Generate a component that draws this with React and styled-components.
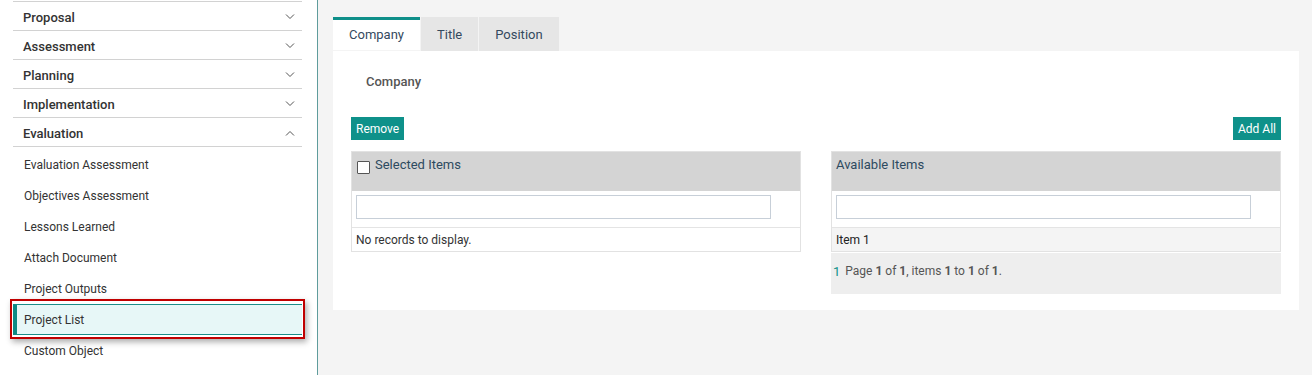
import React from "react";
import styled, { createGlobalStyle } from "styled-components";

const Global = createGlobalStyle`
  html, body { margin: 0; padding: 0; background: #f4f4f4; }
  body { font-family: Roboto, "Liberation Sans", Arial, sans-serif; color: #333; }
  * { box-sizing: border-box; }
`;

const Page = styled.div`
  display: flex;
  height: 375px;
  overflow: hidden;
`;

const Sidebar = styled.nav`
  width: 318px;
  flex: none;
  background: #fff;
  border-right: 1px solid #5f9c9c;
  padding: 1px 15px 0 13px;
`;

const Section = styled.div`
  border-top: 1px solid #d2d2d2;
`;

const SectionHead = styled.div`
  height: 28px;
  display: flex;
  align-items: center;
  justify-content: space-between;
  padding: 2px 7px 0 10px;
  font-size: 13px;
  font-weight: 500;
  color: #333;
`;

const SubList = styled.div`
  border-top: 1px solid #d2d2d2;
  padding-top: 2px;
`;

const SubItem = styled.div`
  position: relative;
  height: 31px;
  display: flex;
  align-items: center;
  font-size: 12px;
  color: #333;
  padding-left: ${(p) => (p.$active ? "7px" : "11px")};
  ${(p) =>
    p.$active &&
    `
    background: #e7f7f7;
    border-left: 4px solid #0e8a85;
    border-top: 1px solid #1a8d88;
    border-bottom: 1px solid #1a8d88;
    &::after {
      content: "";
      position: absolute;
      left: -7px;
      right: -3px;
      top: -6px;
      bottom: -5px;
      border: 2px solid #c00000;
      box-shadow: 2px 3px 6px rgba(0,0,0,0.32);
      pointer-events: none;
    }
  `}
`;

const Chevron = ({ up }) => (
  <svg width="10" height="6" viewBox="0 0 10 6" fill="none">
    <polyline
      points={up ? "1,5.5 5,1.5 9,5.5" : "1,0.5 5,4.5 9,0.5"}
      stroke="#555"
      strokeWidth="1"
    />
  </svg>
);

const Main = styled.main`
  flex: 1;
  padding: 17px 13px 0 15px;
  background: #f4f4f4;
`;

const Tabs = styled.div`
  display: flex;
  gap: 1px;
  align-items: flex-start;
`;

const Tab = styled.div`
  height: ${(p) => (p.$active ? "33px" : "34px")};
  padding: 0 16px 2px;
  display: flex;
  align-items: center;
  font-size: 13px;
  color: #34495e;
  background: ${(p) => (p.$active ? "#fff" : "#e6e6e6")};
  border-top: 3px solid ${(p) => (p.$active ? "#0e8f89" : "#e6e6e6")};
`;

const Panel = styled.section`
  background: #fff;
  padding: 23px 18px 16px 18px;
`;

const Label = styled.div`
  font-size: 13px;
  font-weight: 500;
  color: #555;
  padding-left: 15px;
  height: 16px;
  line-height: 16px;
`;

const ButtonRow = styled.div`
  margin-top: 27px;
  display: flex;
  justify-content: space-between;
`;

const Button = styled.button`
  height: 23px;
  padding: 0 5px;
  background: #0e918a;
  color: #fff;
  border: none;
  font-family: Roboto, "Liberation Sans", Arial, sans-serif;
  font-size: 12px;
  cursor: pointer;
`;

const Lists = styled.div`
  margin-top: 11px;
  display: grid;
  grid-template-columns: 450px 450px;
  justify-content: space-between;
  align-items: start;
`;

const ListBox = styled.div`
  display: flex;
  flex-direction: column;
`;

const Grid = styled.div`
  border: 1px solid #e2e2e2;
`;

const Header = styled.div`
  height: 39px;
  background: #d4d4d4;
  display: flex;
  align-items: flex-start;
  padding: 5px 0 0 ${(p) => (p.$check ? "5px" : "4px")};
  font-size: 13px;
  color: #2d4a60;
  gap: 5px;
`;

const CheckBox = styled.span`
  width: 13px;
  height: 13px;
  margin-top: 4px;
  background: #fff;
  border: 1px solid #555;
  border-radius: 1px;
  flex: none;
`;

const FilterRow = styled.div`
  height: 36px;
  padding: 4px 0 0 4px;
  background: #fff;
`;

const FilterInput = styled.input`
  width: 415px;
  height: 24px;
  border: 1px solid #c7cfd8;
  outline: none;
  display: block;
`;

const Row = styled.div`
  height: 24px;
  border-top: 1px solid #e4e4e4;
  display: flex;
  align-items: center;
  padding-left: 4px;
  font-size: 12px;
  color: ${(p) => (p.$item ? "#222" : "#333")};
  background: ${(p) => (p.$item ? "#f4f4f4" : "#fff")};
`;

const Pager = styled.div`
  margin-top: 1px;
  height: 41px;
  background: #eeeeee;
  display: flex;
  align-items: flex-start;
  padding: 11px 0 0 2px;
  font-size: 12px;
  color: #555;
  gap: 5px;
`;

const PageNum = styled.span`
  color: #0e918a;
  font-size: 13px;
`;

const sections = ["Proposal", "Assessment", "Planning", "Implementation"];
const subItems = [
  "Evaluation Assessment",
  "Objectives Assessment",
  "Lessons Learned",
  "Attach Document",
  "Project Outputs",
  "Project List",
  "Custom Object",
];

export default function App() {
  return (
    <>
      <Global />
      <Page>
        <Sidebar>
          {sections.map((s) => (
            <Section key={s}>
              <SectionHead>
                {s}
                <Chevron />
              </SectionHead>
            </Section>
          ))}
          <Section>
            <SectionHead>
              Evaluation
              <Chevron up />
            </SectionHead>
            <SubList>
              {subItems.map((s) => (
                <SubItem key={s} $active={s === "Project List"}>
                  {s}
                </SubItem>
              ))}
            </SubList>
          </Section>
        </Sidebar>
        <Main>
          <Tabs>
            <Tab $active>Company</Tab>
            <Tab>Title</Tab>
            <Tab>Position</Tab>
          </Tabs>
          <Panel>
            <Label>Company</Label>
            <ButtonRow>
              <Button>Remove</Button>
              <Button>Add All</Button>
            </ButtonRow>
            <Lists>
              <ListBox>
                <Grid>
                  <Header $check>
                    <CheckBox />
                    Selected Items
                  </Header>
                  <FilterRow>
                    <FilterInput />
                  </FilterRow>
                  <Row>No records to display.</Row>
                </Grid>
              </ListBox>
              <ListBox>
                <Grid>
                  <Header>Available Items</Header>
                  <FilterRow>
                    <FilterInput />
                  </FilterRow>
                  <Row $item>Item 1</Row>
                </Grid>
                <Pager>
                  <PageNum>1</PageNum>
                  <span>
                    Page <b>1</b> of <b>1</b>, items <b>1</b> to <b>1</b> of <b>1</b>.
                  </span>
                </Pager>
              </ListBox>
            </Lists>
          </Panel>
        </Main>
      </Page>
    </>
  );
}
